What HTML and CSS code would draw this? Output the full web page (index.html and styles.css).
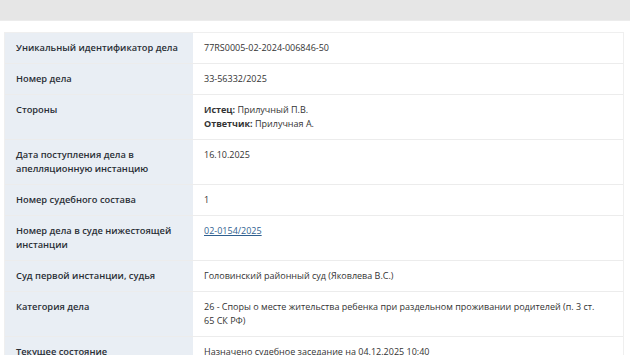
FILE: index.html
```html
<!DOCTYPE html>
<html lang="ru">
<head>
<meta charset="utf-8">
<link rel="stylesheet" href="styles.css">
</head>
<body>
<div class="topbar"></div>
<div class="card">
  <table class="info">
    <tr><th>Уникальный идентификатор дела</th><td>77RS0005-02-2024-006846-50</td></tr>
    <tr><th>Номер дела</th><td>33-56332/2025</td></tr>
    <tr><th>Стороны</th><td><b>Истец:</b> Прилучный П.В.<br><b>Ответчик:</b> Прилучная А.</td></tr>
    <tr><th>Дата поступления дела в апелляционную инстанцию</th><td>16.10.2025</td></tr>
    <tr><th>Номер судебного состава</th><td>1</td></tr>
    <tr><th>Номер дела в суде нижестоящей инстанции</th><td><a href="#" class="link">02-0154/2025</a></td></tr>
    <tr><th>Суд первой инстанции, судья</th><td>Головинский районный суд (Яковлева В.С.)</td></tr>
    <tr><th>Категория дела</th><td>26 - Споры о месте жительства ребенка при раздельном проживании родителей (п. 3 ст. 65 СК РФ)</td></tr>
    <tr><th>Текущее состояние</th><td>Назначено судебное заседание на 04.12.2025 10:40</td></tr>
  </table>
</div>
</body>
</html>
```
FILE: styles.css
```css
html, body {
  margin: 0;
  padding: 0;
  background: #ffffff;
  font-family: "Open Sans", "Noto Sans", sans-serif;
  color: #2b2b2b;
}
.topbar {
  height: 20px;
  background: #e6e6e6;
  border-bottom: 1px solid #ececec;
}
.card {
  margin: 11px 6px 0 4px;
  border: 1px solid #efefef;
  border-bottom: none;
}
.info {
  width: 100%;
  border-collapse: collapse;
  font-size: 9px;
  line-height: 14px;
}
.info th, .info td {
  text-align: left;
  vertical-align: top;
  padding: 8px 11px 8px 11px;
  border-bottom: 1px solid #ececec;
}
.info th {
  width: 166px;
  background: #e9eef4;
  font-size: 9.3px;
  font-weight: 600;
  color: #2a2f36;
}
.info td {
  padding-right: 20px;
  font-weight: 400;
  color: #333333;
}
.info td b {
  font-weight: 700;
}
.link {
  color: #2f5f8f;
  text-decoration: underline;
}
```
